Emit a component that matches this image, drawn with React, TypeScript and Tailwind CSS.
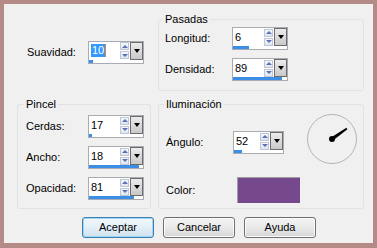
import type { ReactNode } from 'react';

type Spin = { value: string; bar: number; selected?: boolean };

// Spin box with arrows, a drop-down button and the small progress strip under it.
function SpinBox({ value, bar, selected, w = 56 }: Spin & { w?: number }) {
  return (
    <div
      className="flex flex-col h-[23px] border border-[#a9abb2] bg-white shrink-0"
      style={{ width: w }}
    >
      <div className="flex flex-1 min-h-0">
        <div className="flex-1 flex items-center pl-[2px] leading-[13px]">
          {selected ? (
            <>
              <span className="bg-[#3399ff] text-white px-[1px]">{value}</span>
              <span className="w-[1px] h-[13px] bg-[#f08020]" />
            </>
          ) : (
            <span>{value}</span>
          )}
        </div>
        <div className="flex flex-col justify-center gap-[1px] w-[10px] pr-[1px]">
          <div className="h-[8px] border border-[#bcc6d6] bg-gradient-to-b from-[#f6f8fb] to-[#dfe5ee] flex items-center justify-center">
            <div className="w-0 h-0 border-x-[3px] border-x-transparent border-b-[3px] border-b-[#5a72b6]" />
          </div>
          <div className="h-[8px] border border-[#bcc6d6] bg-gradient-to-b from-[#f6f8fb] to-[#dfe5ee] flex items-center justify-center">
            <div className="w-0 h-0 border-x-[3px] border-x-transparent border-t-[3px] border-t-[#5a72b6]" />
          </div>
        </div>
        <div className="w-[13px] border border-[#6c6c6c] bg-gradient-to-b from-[#ececec] to-[#c9c9c9] flex items-center justify-center">
          <div className="w-0 h-0 border-x-[3.5px] border-x-transparent border-t-[4px] border-t-black" />
        </div>
      </div>
      <div className="h-[3px] bg-white">
        <div className="h-full bg-[#3a8ee6]" style={{ width: bar }} />
      </div>
    </div>
  );
}

function Row({ label, labelW, children }: { label: string; labelW: number; children: ReactNode }) {
  return (
    <div className="flex items-center">
      <span className="shrink-0" style={{ width: labelW }}>
        {label}
      </span>
      {children}
    </div>
  );
}

function Group({
  title,
  className,
  children,
}: {
  title: string;
  className: string;
  children: ReactNode;
}) {
  return (
    <fieldset className={`border border-[#dde3e7] rounded-[3px] ${className}`}>
      <legend className="px-[2px] -ml-[2px] leading-[13px]">{title}</legend>
      {children}
    </fieldset>
  );
}

function Dial() {
  return (
    <svg width="52" height="52" viewBox="0 0 52 52" className="shrink-0">
      <circle cx="26" cy="26" r="24.5" fill="none" stroke="#b4b4b4" strokeWidth="1" />
      <polygon points="25,24.6 40.4,14.7 41.4,16.2 27,27.4" fill="#000" />
      <circle cx="26" cy="26" r="3" fill="#000" />
    </svg>
  );
}

function Button({ label, primary }: { label: string; primary?: boolean }) {
  return (
    <button
      type="button"
      className={
        primary
          ? 'w-[72px] h-[21px] rounded-[3px] border border-[#3c7fb1] bg-gradient-to-b from-[#f2f8fc] via-[#e3eff7] to-[#cfe2ee] shadow-[inset_0_0_0_1px_#9fd6f5]'
          : 'w-[72px] h-[21px] rounded-[3px] border border-[#707070] bg-gradient-to-b from-[#f4f4f4] via-[#e9e9e9] to-[#d6d6d6] shadow-[inset_0_0_0_1px_#fbfbfb]'
      }
    >
      {label}
    </button>
  );
}

export default function App() {
  return (
    <div className="w-[377px] h-[248px] bg-[#b48a87] pt-[4px] pl-[4px] font-['Liberation_Sans',Arial,sans-serif] text-[11px] text-black">
      <div className="w-[369px] h-[239px] bg-[#f0f0f0] pl-[13px] pt-[9px] flex flex-col">
        <div className="flex gap-[7px] h-[78px]">
          <div className="w-[134px] flex items-center pl-[10px]">
            <Row label="Suavidad:" labelW={61}>
              <SpinBox value="10" bar={4} selected />
            </Row>
          </div>
          <Group title="Pasadas" className="w-[206px] h-[78px] pl-[6px]">
            <div className="flex flex-col gap-[8px] pt-[1px]">
              <Row label="Longitud:" labelW={67}>
                <SpinBox value="6" bar={16} />
              </Row>
              <Row label="Densidad:" labelW={67}>
                <SpinBox value="89" bar={49} />
              </Row>
            </div>
          </Group>
        </div>

        <div className="flex gap-[7px] mt-[7px]">
          <Group title="Pincel" className="w-[134px] h-[111px] pl-[8px]">
            <div className="flex flex-col gap-[8px] pt-[4px]">
              <Row label="Cerdas:" labelW={62}>
                <SpinBox value="17" bar={3} />
              </Row>
              <Row label="Ancho:" labelW={62}>
                <SpinBox value="18" bar={50} />
              </Row>
              <Row label="Opacidad:" labelW={62}>
                <SpinBox value="81" bar={45} />
              </Row>
            </div>
          </Group>
          <Group title="Iluminación" className="w-[206px] h-[111px] pl-[7px]">
            <div className="flex">
              <div className="flex flex-col">
                <div className="mt-[20px]">
                  <Row label="Ángulo:" labelW={67}>
                    <SpinBox value="52" bar={8} w={51} />
                  </Row>
                </div>
                <div className="mt-[23px]">
                  <Row label="Color:" labelW={71}>
                    <div className="w-[63px] h-[26px] bg-[#75498c] border-t border-l border-[#a0a0a0]" />
                  </Row>
                </div>
              </div>
              <div className="ml-auto mr-[5px] mt-[2px]">
                <Dial />
              </div>
            </div>
          </Group>
        </div>

        <div className="flex gap-[9px] mt-[8px] ml-[65px]">
          <Button label="Aceptar" primary />
          <Button label="Cancelar" />
          <Button label="Ayuda" />
        </div>
      </div>
    </div>
  );
}
